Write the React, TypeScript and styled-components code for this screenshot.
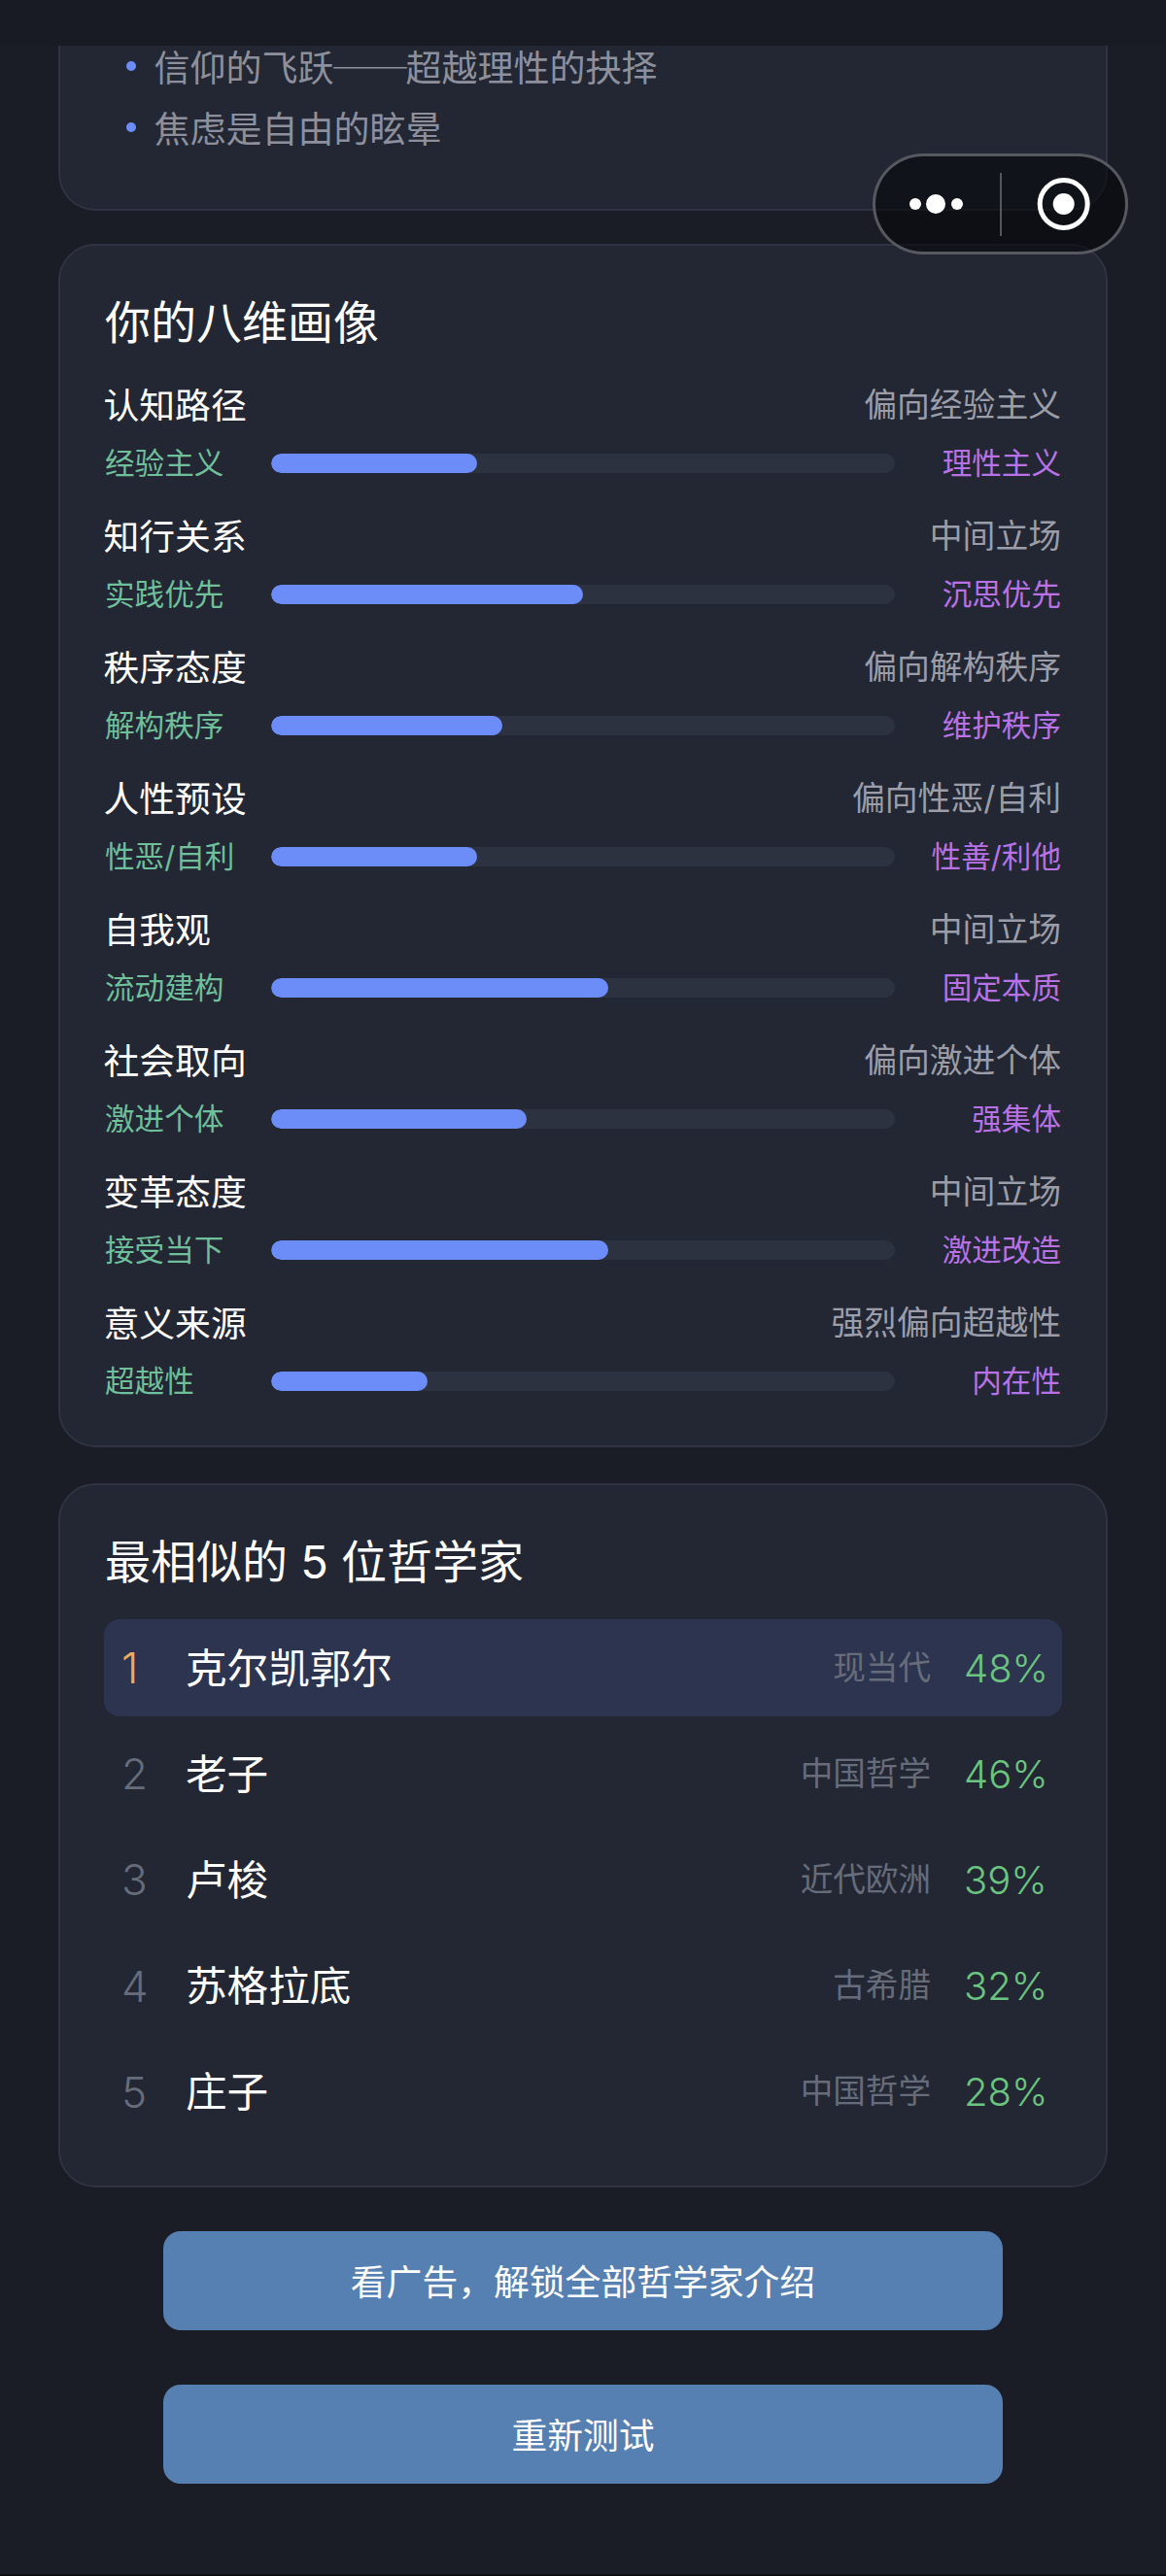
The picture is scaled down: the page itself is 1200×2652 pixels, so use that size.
import styled, { createGlobalStyle } from "styled-components";

const GlobalStyle = createGlobalStyle`
  html, body {
    margin: 0;
    padding: 0;
    background: #1a1d26;
  }
  body {
    font-family: Inter, "Noto Sans CJK SC", sans-serif;
    color: #fff;
  }
`;

const Page = styled.div`
  position: relative;
  width: 1200px;
  height: 2652px;
  overflow: hidden;
  background: #1a1d26;
  border-bottom: 2px solid #0b0c10;
  box-sizing: border-box;
`;

const TopBar = styled.div`
  height: 47px;
  background: #181b23;
`;

const Main = styled.div`
  display: flex;
  flex-direction: column;
  padding: 0 60px;
`;

const Card = styled.section`
  box-sizing: border-box;
  background: #222733;
  border: 2px solid #2f3342;
  border-radius: 38px;
  padding: 47px 46px 0;
`;

const ClippedCard = styled(Card)`
  height: 170px;
  padding-top: 0;
  border-top: 0;
  border-radius: 0 0 38px 38px;
`;

const BulletList = styled.ul`
  list-style: none;
  margin: -11px 0 0;
  padding: 0;
`;

const Bullet = styled.li`
  display: flex;
  align-items: center;
  gap: 19px;
  height: 63px;
  padding-left: 21.5px;
  font-family: "Noto Sans CJK SC", sans-serif;
  font-size: 37px;
  color: #8d909c;
  &::before {
    content: "";
    width: 10px;
    height: 10px;
    border-radius: 50%;
    background: #6c8cf8;
  }
`;

const Dash = styled.span`
  display: inline-block;
  font-feature-settings: "fwid";
  transform: scaleX(1.1);
`;

const PortraitCard = styled(Card)`
  height: 1239px;
  margin-top: 34px;
`;

const CardTitle = styled.h2`
  margin: 0;
  height: 64px;
  line-height: 64px;
  font-size: 47px;
  font-weight: 400;
  color: #fff;
`;

const Dimension = styled.div`
  height: 135px;
  &:first-of-type {
    margin-top: 22px;
  }
`;

const DimensionHead = styled.div`
  display: flex;
  justify-content: space-between;
  align-items: center;
  height: 58px;
`;

const DimensionName = styled.span`
  margin-left: -1.5px;
  font-size: 36.8px;
  color: #fff;
`;

const DimensionValue = styled.span`
  padding-bottom: 2px;
  font-size: 33.8px;
  color: #9b9ea9;
`;

const Scale = styled.div`
  display: grid;
  grid-template-columns: 171px 1fr 171px;
  align-items: center;
  height: 62px;
  padding-top: 2px;
`;

const Pole = styled.span<{ $side: "left" | "right" }>`
  margin-top: -4px;
  font-size: 30.6px;
  color: ${({ $side }) => ($side === "left" ? "#6fbf9b" : "#b872e6")};
  text-align: ${({ $side }) => $side};
`;

const Track = styled.div`
  height: 20px;
  border-radius: 10px;
  background: #2d3240;
  overflow: hidden;
`;

const Fill = styled.div`
  height: 100%;
  border-radius: 10px;
  background: #6c8cf8;
`;

const SimilarCard = styled(Card)`
  height: 724.5px;
  margin-top: 37px;
`;

const PhilosopherList = styled.div`
  display: flex;
  flex-direction: column;
  gap: 9.2px;
  margin: 27px -1px 0;
`;

const PhilosopherRow = styled.div<{ $top?: boolean }>`
  display: flex;
  align-items: center;
  height: 100px;
  padding: 0 18px 0 18px;
  border-radius: 16px;
  background: ${({ $top }) => ($top ? "#2d3450" : "transparent")};
`;

const Rank = styled.span<{ $top?: boolean }>`
  width: 66px;
  font-size: 44px;
  font-weight: 300;
  color: ${({ $top }) => ($top ? "#e8ad5c" : "#666c7a")};
`;

const Name = styled.span`
  flex: 1;
  padding-bottom: 6px;
  font-size: 42.6px;
  color: #fff;
`;

const Era = styled.span`
  padding-bottom: 6px;
  font-size: 33.6px;
  color: #666c7a;
`;

const Percent = styled.span`
  width: 83px;
  margin-left: 34px;
  font-size: 40px;
  font-weight: 300;
  text-align: right;
  color: #6bc47f;
`;

const Actions = styled.div`
  display: flex;
  flex-direction: column;
  gap: 56px;
  margin: 45.5px 108px 0;
`;

const ActionButton = styled.button`
  height: 102px;
  padding: 0 0 3px;
  border: 0;
  border-radius: 18px;
  background: #5680b1;
  color: #fff;
  font-family: "Noto Sans CJK SC", sans-serif;
  font-size: 36.8px;
`;

const Capsule = styled.div`
  position: absolute;
  top: 158px;
  left: 898px;
  box-sizing: border-box;
  display: flex;
  align-items: center;
  width: 263px;
  height: 104px;
  border: 3px solid rgba(110, 112, 120, 0.75);
  border-radius: 52px;
  background: rgba(6, 7, 10, 0.6);
`;

const CapsuleSide = styled.div`
  flex: 1;
  display: flex;
  align-items: center;
  justify-content: center;
`;

const CapsuleDivider = styled.div`
  width: 2px;
  height: 65px;
  background: #55575d;
`;

const dimensions = [
  { name: "认知路径", value: "偏向经验主义", left: "经验主义", right: "理性主义", pct: 33 },
  { name: "知行关系", value: "中间立场", left: "实践优先", right: "沉思优先", pct: 50 },
  { name: "秩序态度", value: "偏向解构秩序", left: "解构秩序", right: "维护秩序", pct: 37 },
  { name: "人性预设", value: "偏向性恶/自利", left: "性恶/自利", right: "性善/利他", pct: 33 },
  { name: "自我观", value: "中间立场", left: "流动建构", right: "固定本质", pct: 54 },
  { name: "社会取向", value: "偏向激进个体", left: "激进个体", right: "强集体", pct: 41 },
  { name: "变革态度", value: "中间立场", left: "接受当下", right: "激进改造", pct: 54 },
  { name: "意义来源", value: "强烈偏向超越性", left: "超越性", right: "内在性", pct: 25 },
];

const philosophers = [
  { name: "克尔凯郭尔", era: "现当代", pct: 48 },
  { name: "老子", era: "中国哲学", pct: 46 },
  { name: "卢梭", era: "近代欧洲", pct: 39 },
  { name: "苏格拉底", era: "古希腊", pct: 32 },
  { name: "庄子", era: "中国哲学", pct: 28 },
];

export default function App() {
  return (
    <Page>
      <GlobalStyle />
      <TopBar />
      <Main>
        <ClippedCard>
          <BulletList>
            <Bullet>
              <span>
                信仰的飞跃<Dash>——</Dash>超越理性的抉择
              </span>
            </Bullet>
            <Bullet>焦虑是自由的眩晕</Bullet>
          </BulletList>
        </ClippedCard>

        <PortraitCard>
          <CardTitle>你的八维画像</CardTitle>
          {dimensions.map((d) => (
            <Dimension key={d.name}>
              <DimensionHead>
                <DimensionName>{d.name}</DimensionName>
                <DimensionValue>{d.value}</DimensionValue>
              </DimensionHead>
              <Scale>
                <Pole $side="left">{d.left}</Pole>
                <Track>
                  <Fill style={{ width: `${d.pct}%` }} />
                </Track>
                <Pole $side="right">{d.right}</Pole>
              </Scale>
            </Dimension>
          ))}
        </PortraitCard>

        <SimilarCard>
          <CardTitle>最相似的 5 位哲学家</CardTitle>
          <PhilosopherList>
            {philosophers.map((p, i) => (
              <PhilosopherRow key={p.name} $top={i === 0}>
                <Rank $top={i === 0}>{i + 1}</Rank>
                <Name>{p.name}</Name>
                <Era>{p.era}</Era>
                <Percent>{p.pct}%</Percent>
              </PhilosopherRow>
            ))}
          </PhilosopherList>
        </SimilarCard>

        <Actions>
          <ActionButton>看广告，解锁全部哲学家介绍</ActionButton>
          <ActionButton>重新测试</ActionButton>
        </Actions>
      </Main>

      <Capsule>
        <CapsuleSide>
          <svg width="70" height="24" viewBox="0 0 70 24">
            <circle cx="12" cy="12" r="6" fill="#fff" />
            <circle cx="33" cy="12" r="10" fill="#fff" />
            <circle cx="55" cy="12" r="6" fill="#fff" />
          </svg>
        </CapsuleSide>
        <CapsuleDivider />
        <CapsuleSide>
          <svg width="56" height="56" viewBox="0 0 56 56">
            <circle cx="28.7" cy="28" r="24.5" fill="none" stroke="#fff" strokeWidth="5" />
            <circle cx="28.7" cy="28" r="11" fill="#fff" />
          </svg>
        </CapsuleSide>
      </Capsule>
    </Page>
  );
}
